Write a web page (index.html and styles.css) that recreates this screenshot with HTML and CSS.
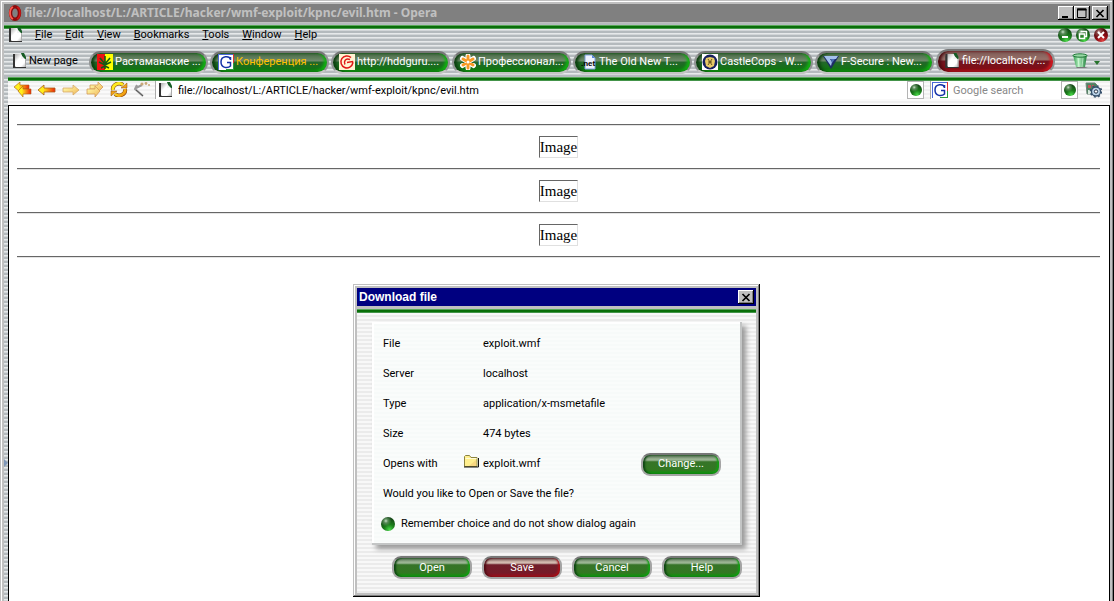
FILE: index.html
```html
<!DOCTYPE html>
<html lang="en">
<head>
<meta charset="utf-8">
<title>file://localhost/L:/ARTICLE/hacker/wmf-exploit/kpnc/evil.htm - Opera</title>
<link rel="stylesheet" href="styles.css">
</head>
<body>
<svg class="defs" aria-hidden="true">
  <defs>
    <linearGradient id="paper" x1="0" y1="0" x2="1" y2="1"><stop offset="0" stop-color="#a4a4a4"/><stop offset=".4" stop-color="#fff"/><stop offset=".75" stop-color="#fff"/><stop offset="1" stop-color="#b0b0b0"/></linearGradient>
    <linearGradient id="fire" x1="0" y1="0" x2="1" y2="0"><stop offset=".3" stop-color="#ffee1c"/><stop offset=".95" stop-color="#f0300c"/></linearGradient>
    <linearGradient id="gold" x1="0" y1="0" x2="1" y2="1"><stop offset=".4" stop-color="#ffec20"/><stop offset="1" stop-color="#ee8a10"/></linearGradient>
    <linearGradient id="pale" x1="0" y1="0" x2="1" y2="1"><stop offset=".1" stop-color="#fffba8"/><stop offset=".9" stop-color="#f2bd62"/></linearGradient>
    <linearGradient id="bin" x1="0" y1="0" x2="1" y2="0"><stop offset="0" stop-color="#2d9a48"/><stop offset=".4" stop-color="#b4efc0"/><stop offset="1" stop-color="#1c7d37"/></linearGradient>
    <symbol id="doc" viewBox="0 0 15 16"><path d="M1 2v13h13v-2H4z" fill="#333"/><path d="M2 1h8l4 4v9H2z" fill="url(#paper)"/><path d="M1 1h2v12l1 2H1z" fill="#333"/><path d="M13.500 6v8" stroke="#aaa"/><path d="M9 0h3l2 4v2h-3z" fill="#175c26"/><path d="M9 2l4 4H9z" fill="#f3f3f3"/></symbol>
    <symbol id="google" viewBox="0 0 16 16"><path fill="#fff" d="M0 0h16v16H0z"/><path d="M0 .5h16" stroke="#4b69d8"/><path d="M.5 0v16" stroke="#4b69d8"/><path d="M15.500 0v9" stroke="#d33"/><path d="M15.500 9v7M8 15.500h8" stroke="#2a9a3a"/><path d="M12.500 5.500C11.500 1.500 3 1.500 3 8s7 6.500 9.500 4V8.500H9M12.500 3v3" fill="none" stroke="#1432a8" stroke-width="1.500"/></symbol>
  </defs>
</svg>

<div class="window">
  <header class="titlebar">
    <svg class="logo" viewBox="0 0 14 16" aria-hidden="true"><ellipse cx="7" cy="8" rx="4.500" ry="6.300" fill="none" stroke="#8c0b0b" stroke-width="3.400"/><path d="M5 2C1 4 1 12 5 14" fill="none" stroke="#ff5b50" stroke-width="1.800"/><path d="M9 2c4 2 4 10 0 12" fill="none" stroke="#d01616" stroke-width="1.500"/></svg>
    <span class="title">file://localhost/L:/ARTICLE/hacker/wmf-exploit/kpnc/evil.htm - Opera</span>
    <div class="sysbuttons">
      <button class="sys" aria-label="Minimize"><svg viewBox="0 0 12 11"><path d="M2 9h6" stroke="#000" stroke-width="2"/></svg></button>
      <button class="sys" aria-label="Maximize"><svg viewBox="0 0 12 11"><path d="M1.500 1h8.500v8.500H1.500z" fill="none" stroke="#000"/><path d="M1 1.500h9.500" stroke="#000" stroke-width="2"/></svg></button>
      <button class="sys close" aria-label="Close"><svg viewBox="0 0 12 11"><path d="M2.500 2l7 7M9.500 2l-7 7" stroke="#000" stroke-width="1.700"/></svg></button>
    </div>
  </header>

  <div class="chrome">
    <div class="green"></div>
    <nav class="menubar">
      <svg class="doc" aria-hidden="true"><use href="#doc"/></svg>
      <div class="menus">
        <button><u>F</u>ile</button><button><u>E</u>dit</button><button><u>V</u>iew</button><button><u>B</u>ookmarks</button><button><u>T</u>ools</button><button><u>W</u>indow</button><button><u>H</u>elp</button>
      </div>
      <div class="pagebuttons">
        <button class="ball" aria-label="Minimize page"><svg viewBox="0 0 14 14"><path d="M4 9h6" stroke="#fff" stroke-width="2"/></svg></button>
        <button class="ball" aria-label="Restore page"><svg viewBox="0 0 14 14"><path d="M5.500 4V3.500h5v5H9M3.500 6h5v4.500h-5z" fill="none" stroke="#fff" stroke-width="1.500"/></svg></button>
        <button class="ball red" aria-label="Close page"><svg viewBox="0 0 14 14"><path d="M4 4l6 6M10 4l-6 6" stroke="#fff" stroke-width="2"/></svg></button>
      </div>
    </nav>

    <div class="tabbar">
      <button class="newpage"><svg class="doc" aria-hidden="true"><use href="#doc"/></svg>New page</button>
      <div class="tabs">
        <button class="tab"><svg viewBox="0 0 16 16"><path fill="#e11" d="M0 0h8v16H0z"/><path fill="#ff0" d="M8 0h8v16H8z"/><path d="M8 15V2M8 10L3 4M8 10l5-6M8 11L2 8M8 11l6-3M8 12l-4 2M8 12l4 2" fill="none" stroke="#175a12" stroke-width="1.600"/></svg>Растаманские ...</button>
        <button class="tab unread"><svg><use href="#google"/></svg>Конференция ...</button>
        <button class="tab"><svg viewBox="0 0 16 16"><path fill="#fff3d2" d="M0 0h16v16H0z"/><path d="M12 3.500A6 6 0 1 0 13.800 9l-.3-1.500L8 8.500M11 5.500C6 3.500 4.500 8 6 10.500" fill="none" stroke="#e01818" stroke-width="1.500"/></svg>http://hddguru....</button>
        <button class="tab"><svg viewBox="0 0 16 16"><g stroke="#fff" stroke-width="5" stroke-linecap="round"><path d="M8 2v12M2.500 4.500l11 7M13.500 4.500l-11 7"/></g><g stroke="#f79a24" stroke-width="3" stroke-linecap="round"><path d="M8 2v12M3 5l10 6M13 5L3 11"/></g><circle cx="8" cy="8" r="1.500" fill="#fff"/></svg>Профессионал...</button>
        <button class="tab"><svg viewBox="0 0 16 16"><path d="M4 1h7l3 3v11H4z" fill="#eef3ff" stroke="#7da0dc"/><path d="M11 1v3h3z" fill="#5c88d8"/><text x="0" y="12" class="net">.net</text></svg>The Old New T...</button>
        <button class="tab"><svg viewBox="0 0 16 16"><path fill="#fff" d="M0 0h16v16H0z"/><circle cx="8" cy="8" r="7.500" fill="#17205e"/><path d="M4 4l4-1 4 1 1 3-1 5-4 2-4-2-1-5z" fill="#e8ca66"/><path d="M6 5l4 6M10 5l-4 6M6 8h4" stroke="#66511d"/></svg>CastleCops - W...</button>
        <button class="tab"><svg viewBox="0 0 16 16"><path d="M0 2h16L8 15z" fill="#1d2c66"/><path d="M1 2h14l-2 3H7l2 3-1 4z" fill="#a4c1ec"/><path d="M8 5h4l-3 4z" fill="#4d70b8"/></svg>F-Secure : New...</button>
        <button class="tab active" aria-current="page"><svg><use href="#doc"/></svg>file://localhost/...</button>
      </div>
      <button class="trash" aria-label="Closed pages">
        <svg viewBox="0 0 28 16"><path d="M1 2h14l-2 12q-5 2-9 0z" fill="url(#bin)"/><path d="M4 14h9l3 1H5z" fill="#777"/><ellipse cx="8" cy="2.500" rx="7" ry="1.700" fill="#97d8a4" stroke="#207738"/><path d="M6 5l1 9M11 5l-1 9" stroke="#dfffe4" opacity=".6"/><path d="M22 8h6l-3 4z" fill="#26742b"/></svg>
      </button>
    </div>
  </div>

  <div class="body">
    <div class="gutter"><svg viewBox="0 0 4 8" aria-hidden="true"><path d="M0 0l4 4-4 4z" fill="#7f97b8"/></svg></div>
    <div class="view">
      <div class="green"></div>
      <form class="addressbar">
        <div class="nav">
          <button type="button" aria-label="Rewind"><svg viewBox="0 0 18 15"><g fill="url(#fire)" stroke="#a85a18" stroke-width=".6"><path d="M0 5l6-5v3h9v4H6v3z"/><path d="M4 9l5-5v3h8v5H9v3z"/></g></svg></button>
          <button type="button" aria-label="Back"><svg viewBox="0 0 18 15"><path d="M0 8l6-5v3h11v4H6v3z" fill="url(#fire)" stroke="#a85a18" stroke-width=".8"/></svg></button>
          <button type="button" aria-label="Forward"><svg viewBox="0 0 18 15"><path d="M17 8l-6-5v3H1v4h10v3z" fill="url(#pale)" stroke="#d6a868" stroke-width=".8"/></svg></button>
          <button type="button" aria-label="Fast forward"><svg viewBox="0 0 18 15"><g fill="url(#pale)" stroke="#d39a58" stroke-width=".8"><path d="M17 5l-5-5v3H4v4h8v3z"/><path d="M14 9L9 4v3H1v5h8v3z"/></g></svg></button>
          <button type="button" aria-label="Reload"><svg viewBox="0 0 18 15"><g fill="none" stroke="#8a4a10" stroke-width="4"><path d="M3 8a6 5.500 0 0 1 10-5M15 7a6 5.500 0 0 1-10 5"/></g><g fill="none" stroke="url(#gold)" stroke-width="2.800"><path d="M3 8a6 5.500 0 0 1 10-5M15 7a6 5.500 0 0 1-10 5"/></g><path d="M11 6h6V1zM7 9H1v5z" fill="#f3a518" stroke="#8a4a10" stroke-width=".5"/></svg></button>
          <button type="button" aria-label="Wand"><svg viewBox="0 0 18 15"><path d="M3 3L1 7l8 7M2 6l6-3" fill="none" stroke="#9b9b9b" stroke-width="2"/><path d="M2 8l7 6" stroke="#555"/><g fill="#c9a878"><circle cx="8" cy="2" r="1.600"/><circle cx="12" cy="1.500" r="1.400"/><circle cx="15" cy="3" r="1"/></g></svg></button>
        </div>
        <div class="field address">
          <svg class="doc" aria-hidden="true"><use href="#doc"/></svg>
          <input type="text" aria-label="Address" value="file://localhost/L:/ARTICLE/hacker/wmf-exploit/kpnc/evil.htm">
          <span class="cell"><button type="button" class="ball small" aria-label="Go"></button></span>
        </div>
        <div class="field search">
          <svg class="google" aria-hidden="true"><use href="#google"/></svg>
          <input type="text" aria-label="Search" placeholder="Google search">
          <span class="cell"><button type="button" class="ball small" aria-label="Search now"></button></span>
        </div>
        <button type="button" class="panels" aria-label="Page settings"><svg viewBox="0 0 17 16"><path d="M1 1h9l2 2v9H2z" fill="#4c8460" stroke="#71877a"/><path d="M3 3h3v3H3zM7 3h2v2H7z" fill="#c5545a"/><path d="M3 8h3v4H3z" fill="#d8eade"/><circle cx="11" cy="9.500" r="4.500" fill="#bcd5ea" stroke="#36506c" stroke-width="1.300"/><circle cx="11" cy="9.500" r="5.600" fill="none" stroke="#36506c" stroke-width="1.500" stroke-dasharray="2 2.400"/><circle cx="11" cy="9.500" r="1.700" fill="#fff" stroke="#1e2f44"/></svg></button>
      </form>

      <main class="page">
        <hr>
        <span class="missing">Image</span>
        <hr>
        <span class="missing">Image</span>
        <hr>
        <span class="missing">Image</span>
        <hr>
      </main>
    </div>
  </div>

  <section class="dialog" role="dialog" aria-labelledby="dialog-title">
    <div class="dialog-title">
      <h1 id="dialog-title">Download file</h1>
      <button class="sys" aria-label="Close dialog"><svg viewBox="0 0 12 11"><path d="M2.500 2l7 7M9.500 2l-7 7" stroke="#000" stroke-width="1.700"/></svg></button>
    </div>
    <div class="green"></div>
    <div class="dialog-body">
      <div class="panel">
        <dl>
          <div class="row"><dt>File</dt><dd>exploit.wmf</dd></div>
          <div class="row"><dt>Server</dt><dd>localhost</dd></div>
          <div class="row"><dt>Type</dt><dd>application/x-msmetafile</dd></div>
          <div class="row"><dt>Size</dt><dd>474 bytes</dd></div>
          <div class="row"><dt>Opens with</dt><dd><svg class="folder" viewBox="0 0 16 16" aria-hidden="true"><path d="M1.500 13.500v-10l1-1h4l1.500 2h6v9z" fill="#ffef8e" stroke="#8c8440"/><path d="M2.500 5.500h11" stroke="#fffbd8"/><path d="M1 14h14.500V5" fill="none" stroke="#111"/><path d="M6 13l7-6v6z" fill="#f4c878" opacity=".6"/></svg>exploit.wmf</dd><dd class="action"><button class="pill">Change...</button></dd></div>
        </dl>
        <p class="row">Would you like to Open or Save the file?</p>
        <div class="row"><label class="remember"><input type="checkbox" class="ball">Remember choice and do not show dialog again</label></div>
      </div>
      <div class="actions">
        <button class="pill">Open</button><button class="pill red">Save</button><button class="pill">Cancel</button><button class="pill">Help</button>
      </div>
    </div>
  </section>
</div>
</body>
</html>
```
FILE: styles.css
```css
* { box-sizing: border-box; }

body {
  margin: 0;
  font: 11px/14px Roboto, "Liberation Sans", sans-serif;
  color: #000;
  background: #c0c0c0;
}

button, input { font: inherit; color: inherit; }
button { margin: 0; padding: 0; border: 0; background: none; white-space: nowrap; }
svg { display: block; flex: none; }
.defs { position: absolute; width: 0; height: 0; }

/* Window frame */
.window {
  position: relative;
  display: flex;
  flex-direction: column;
  min-height: 100vh;
  padding: 4px 4px 0;
  background: #c0c0c0;
  box-shadow: inset -1px 0 #000, inset -2px 0 #808080, inset 1px 0 #c0c0c0, inset 0 1px #c0c0c0, inset 2px 2px #fff;
}

.titlebar {
  display: flex;
  align-items: center;
  height: 18px;
  padding: 0 2px 0 4px;
  background: #808080;
  color: #c0c0c0;
}
.logo { width: 14px; height: 16px; margin-right: 2px; }
.title { flex: 1; font: bold 12px/18px "Noto Sans", sans-serif; white-space: nowrap; overflow: hidden; }
.sysbuttons { display: flex; }
.sys {
  display: grid;
  place-items: center;
  width: 16px;
  height: 14px;
  background: #c0c0c0;
  box-shadow: inset -1px -1px #000, inset 1px 1px #fff, inset -2px -2px #808080;
}
.sys svg { width: 12px; height: 11px; }
.sys.close { margin-left: 2px; }

.green {
  height: 4px;
  background: linear-gradient(#58a858 0 1px, #0a6a0a 1px 2px, #087208 2px 3px, #44944a 3px);
}

/* Striped toolbar area */
.chrome, .gutter {
  background: repeating-linear-gradient(#b4babd 0 2px, #e6e9ea 2px 3px, #d2d6d8 3px 4px);
}
.chrome { padding-top: 2px; border-top: 1px solid #c0c0c0; }
.menubar { display: flex; align-items: center; height: 12px; padding: 0 2px 0 4px; }
.doc { width: 15px; height: 16px; }
.google { width: 16px; height: 16px; }
.menus { display: flex; gap: 13px; flex: 1; margin-left: 12px; }
.pagebuttons { display: flex; gap: 4px; }

.ball {
  appearance: none;
  flex: none;
  display: grid;
  place-items: center;
  width: 14px;
  height: 14px;
  margin: 0;
  border-radius: 50%;
  background: radial-gradient(circle at 35% 28%, #c8e0c8 0, #5a8c5a 15%, transparent 40%), radial-gradient(circle at 60% 90%, #48d848 0, #1a7c1a 35%, #123f14 80%);
}
.ball.red { background: radial-gradient(circle at 35% 28%, #d0a8a8 0, #8a4a4a 15%, transparent 40%), radial-gradient(circle at 60% 90%, #e04040 0, #900c14 35%, #4a080c 80%); }
.ball.small { width: 12px; height: 12px; }
.ball svg { width: 14px; height: 14px; }

.tabbar { display: flex; align-items: center; height: 36px; padding: 4px 10px 0 8px; }
.newpage { display: flex; align-items: center; gap: 2px; width: 77px; }
.tabs { display: flex; align-items: flex-end; gap: 2px; flex: 1; margin-right: 17px; }
.tab {
  display: flex;
  align-items: center;
  gap: 2px;
  flex: 1;
  min-width: 0;
  height: 23px;
  padding: 0 6px;
  overflow: hidden;
  border: 2px solid #919494;
  border-top-color: #777;
  border-bottom-color: #c4c4c4;
  border-radius: 12px;
  color: #fff;
  background: linear-gradient(#466844 0, #6d8a69 40%, #23682a 50%, #127413 85%, #0c8b0c);
  box-shadow: inset 3px 0 3px #0d3f10, inset -3px -1px 3px #12b012;
}
.tab svg { width: 16px; height: 16px; }
.tab.unread { color: #ffc000; }
.tab.active {
  height: 25px;
  padding-bottom: 1px;
  background: linear-gradient(#7c5954 0, #98716a 40%, #70151f 50%, #820c15 85%, #a31018);
  box-shadow: inset 3px 0 3px #4c0c12, inset -3px -1px 3px #d01820;
}
.net { font: bold 8px "Liberation Sans", sans-serif; }
.trash svg { width: 28px; height: 16px; }

/* Page area */
.body { display: flex; flex: 1; }
.gutter { display: flex; align-items: flex-end; width: 4px; padding-bottom: 134px; }
.gutter svg { width: 4px; height: 8px; }
.view { display: flex; flex-direction: column; flex: 1; min-width: 0; }
.addressbar {
  display: flex;
  align-items: flex-start;
  height: 24px;
  padding: 0 8px 0 6px;
  background: repeating-linear-gradient(#f0f0f0 0 2px, #fafafa 2px 4px);
}
.nav { display: flex; gap: 6px; padding-top: 1px; margin-right: 3px; }
.nav svg { width: 18px; height: 15px; }
.field {
  display: flex;
  align-items: center;
  height: 18px;
  border-left: 1px solid #aaa;
  background: #fff;
}
.field input { flex: 1; min-width: 0; height: 18px; padding: 0 5px; border: 0; background: none; outline: 0; }
.field .doc { margin-left: 2px; }
.field .google { margin-left: 1px; }
.field input::placeholder { color: #888; opacity: 1; }
.cell { display: grid; place-items: center; width: 17px; height: 18px; border: 1px solid #b4b4b4; }
.address { flex: 1; margin-right: 6px; }
.search { width: 148px; }
.panels { margin: 1px 0 0 7px; }
.panels svg { width: 17px; height: 16px; }

.page {
  display: flex;
  flex-direction: column;
  align-items: center;
  gap: 10px;
  flex: 1;
  padding: 18px 9px 18px 8px;
  border: 1px solid #000;
  border-bottom: 0;
  background: #fff;
}
.page hr { align-self: stretch; margin: 0; border: 0; border-top: 1px solid #666; border-bottom: 1px solid #e4e4e4; }
.missing {
  border: 1px solid #666;
  border-right-color: #e0e0e0;
  border-bottom-color: #e0e0e0;
  font: 15px/20px "Liberation Serif", serif;
}

/* Download dialog */
.dialog {
  position: absolute;
  top: 284px;
  left: 0;
  right: 1px;
  width: 407px;
  margin: 0 auto;
  padding: 4px;
  background: #c0c0c0;
  box-shadow: inset -1px -1px #000, inset 1px 1px #c0c0c0, inset -2px -2px #808080, inset 2px 2px #fff;
}
.dialog-title {
  display: flex;
  align-items: center;
  justify-content: space-between;
  height: 18px;
  margin-bottom: 3px;
  padding: 0 2px;
  background: #000080;
  color: #fff;
}
.dialog-title h1 { margin: 0; font: bold 12px/18px "Liberation Sans", sans-serif; }
.dialog-body {
  padding: 9px 14px 14px 15px;
  background: repeating-linear-gradient(#f8f8f8 0 2px, #ebebeb 2px 4px);
}
.panel {
  padding: 7px 19px 4px 9px;
  border: solid #c3c5c5;
  border-width: 0 2px 2px 0;
  background: repeating-linear-gradient(#fafcfb 0 2px, #f7faf9 2px 4px);
  box-shadow: inset 2px 2px #fff, 4px 4px 5px #999;
}
dl, dd, p { margin: 0; }
.row { display: flex; align-items: center; height: 30px; padding-left: 2px; }
dt { width: 100px; }
dd { position: relative; }
.folder { position: absolute; right: 100%; top: -4px; width: 16px; height: 16px; margin-right: 4px; }
.action { margin-left: auto; }
.remember { display: flex; align-items: center; gap: 6px; margin-left: -2px; }
.pill {
  width: 80px;
  height: 23px;
  border: 2px solid #a4a4a4;
  border-top-color: #777;
  border-radius: 9px;
  color: #fff;
  background: linear-gradient(#4a6848 0, #9fb797 22%, #8fae88 28%, #367428 36%, #327822 78%, #0b980b);
  box-shadow: inset 2px 0 2px #0e4512, inset -2px -1px 2px #12a012;
}
.pill.red {
  background: linear-gradient(#684848 0, #d8c0b4 22%, #c4a8a0 28%, #701e2a 36%, #761a28 78%, #98101c);
  box-shadow: inset 2px 0 2px #500c14, inset -2px -1px 2px #a81018;
}
.actions { display: flex; gap: 10px; justify-content: flex-end; margin-top: 11px; }
```
